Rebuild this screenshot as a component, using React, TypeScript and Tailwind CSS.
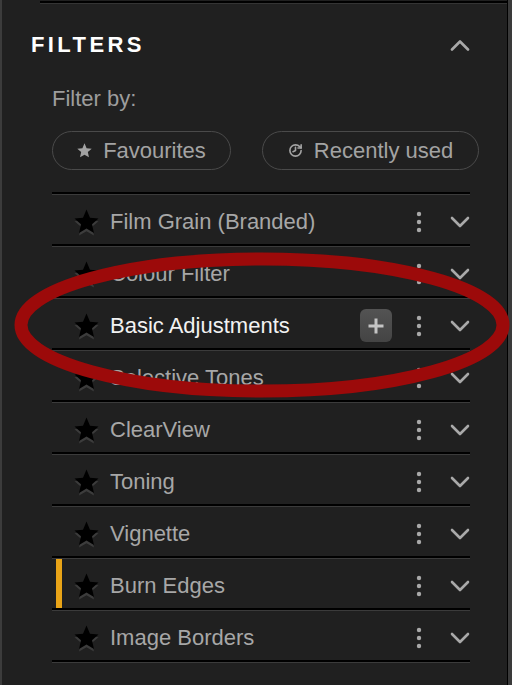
import { History } from "lucide-react";

type Filter = {
	name: string;
	active?: boolean;
	marked?: boolean;
};

const filters: Filter[] = [
	{ name: "Film Grain (Branded)" },
	{ name: "Colour Filter" },
	{ name: "Basic Adjustments", active: true },
	{ name: "Selective Tones" },
	{ name: "ClearView" },
	{ name: "Toning" },
	{ name: "Vignette" },
	{ name: "Burn Edges", marked: true },
	{ name: "Image Borders" },
];

const STAR = "M12 2l2.9 6.9 7.1.6-5.4 4.7 1.6 7.3L12 17.8 5.8 21.5l1.6-7.3L2 9.5l7.1-.6z";

function FavStar() {
	return (
		<svg width="25" height="27" viewBox="1.6 1.6 20.8 22.4" className="shrink-0">
			<path d={STAR} fill="#3c3c3c" transform="translate(0 2.2)" />
			<path d={STAR} fill="#000" />
		</svg>
	);
}

function Kebab() {
	return (
		<svg width="6" height="22" viewBox="0 0 6 22" className="shrink-0">
			<circle cx="3" cy="3" r="2.2" fill="#a9a9a9" />
			<circle cx="3" cy="11" r="2.2" fill="#a9a9a9" />
			<circle cx="3" cy="19" r="2.2" fill="#a9a9a9" />
		</svg>
	);
}

function Chevron({ up }: { up?: boolean }) {
	return (
		<svg width="20" height="12" viewBox="0 0 20 12" className="shrink-0">
			<path
				d={up ? "M2 10.5 10 2.5l8 8" : "M2 2l8 8 8-8"}
				fill="none"
				stroke="#a9a9a9"
				strokeWidth="2.6"
				strokeLinecap="round"
				strokeLinejoin="round"
			/>
		</svg>
	);
}

function Separator() {
	return (
		<>
			<div className="h-[2px] bg-black" />
			<div className="h-px bg-[#3b3b3b]" />
		</>
	);
}

function FilterRow({ filter }: { filter: Filter }) {
	return (
		<div>
			<Separator />
			<div className="relative flex h-[49px] items-center pt-[4px]">
				{filter.marked ? <div className="absolute bottom-0 left-[4px] top-0 w-[6px] bg-[#e9a417]" /> : null}
				<div className="ml-[22px] mt-[2px]">
					<FavStar />
				</div>
				<span
					className={
						"ml-[11px] flex-1 text-[22px] leading-none " + (filter.active ? "text-[#f2f2f2]" : "text-[#a7a7a7]")
					}
				>
					{filter.name}
				</span>
				{filter.active ? (
					<div className="mr-[24px] flex h-[33px] w-[32px] items-center justify-center rounded-md bg-gradient-to-b from-[#535353] to-[#444444]">
						<svg width="18" height="18" viewBox="0 0 18 18">
							<path d="M9 1.5v15M1.5 9h15" stroke="#c4c4c4" strokeWidth="3" />
						</svg>
					</div>
				) : null}
				<Kebab />
				<div className="ml-[28px]">
					<Chevron />
				</div>
			</div>
		</div>
	);
}

export default function App() {
	return (
		<div className="relative flex h-[685px] w-[512px] overflow-hidden bg-[#202020] font-['Liberation_Sans',Arial,sans-serif]">
			<div className="w-[2px] shrink-0 bg-[#3c3c3c]" />
			<div className="flex flex-1 flex-col">
				<div className="ml-[38px] mt-px h-[2px] bg-black" />
				<div className="ml-[38px] h-px bg-[#343434]" />

				<div className="mt-[21px] flex h-[40px] items-center justify-between pl-[29px] pr-[37px]">
					<h2 className="text-[22px] font-bold leading-none tracking-[3.4px] text-white">FILTERS</h2>
					<Chevron up />
				</div>

				<p className="mt-[22px] pl-[50px] text-[22px] leading-[24px] text-[#9d9d9d]">Filter by:</p>

				<div className="mt-[20px] flex gap-[31px] pl-[50px]">
					<button className="flex h-[39px] w-[179px] items-center justify-center gap-[11px] rounded-full border border-[#4a4a4a] text-[22px] text-[#a3a3a3]">
						<svg width="15" height="15" viewBox="1.6 1.6 20.8 20.8">
							<path d={STAR} fill="#a3a3a3" />
						</svg>
						Favourites
					</button>
					<button className="flex h-[39px] w-[217px] items-center justify-center gap-[11px] rounded-full border border-[#4a4a4a] text-[22px] text-[#a3a3a3]">
						<History size={15} strokeWidth={2.6} color="#a3a3a3" style={{ transform: "scaleX(-1)" }} />
						Recently used
					</button>
				</div>

				<div className="ml-[50px] mt-[22px] w-[418px]">
					{filters.map((f) => (
						<FilterRow key={f.name} filter={f} />
					))}
					<Separator />
				</div>
			</div>
			<div className="w-px shrink-0 bg-black" />
			<div className="w-[4px] shrink-0 bg-[#3a3a3a]" />

			{/* annotation ring */}
			<svg className="pointer-events-none absolute inset-0" width="512" height="685" viewBox="0 0 512 685">
				<ellipse cx="262" cy="325" rx="241" ry="66" fill="none" stroke="#9c0a0a" strokeWidth="13" />
			</svg>
		</div>
	);
}
